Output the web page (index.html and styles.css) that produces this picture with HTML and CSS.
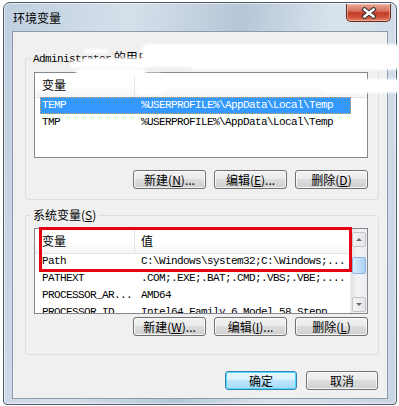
FILE: index.html
```html
<!DOCTYPE html>
<html lang="zh-CN">
<head>
    <meta charset="UTF-8">
    <title>环境变量</title>
    <link rel="stylesheet" href="styles.css">
</head>
<body>
    <div class="window">
        <div class="titlebar">
            <span class="title">环境变量</span>
            <div class="close-btn">
                <svg width="16" height="12" viewBox="0 0 16 12">
                    <path d="M3.5 2.5 L12.5 9.5 M12.5 2.5 L3.5 9.5" stroke="#3b3434" stroke-width="4.6" stroke-linecap="square" fill="none"/>
                    <path d="M3.5 2.5 L12.5 9.5 M12.5 2.5 L3.5 9.5" stroke="#ffffff" stroke-width="2.4" stroke-linecap="square" fill="none"/>
                </svg>
            </div>
        </div>

        <div class="client">
            <fieldset class="group group-user">
                <legend><span class="mono">Administrator</span> 的用户变量(<u>U</u>)</legend>
                <div class="list">
                    <div class="list-main">
                        <div class="list-head"><span class="col1">变量</span><span class="col2">值</span></div>
                        <div class="row selected"><span class="col1 mono">TEMP</span><span class="col2 mono">%USERPROFILE%\AppData\Local\Temp</span></div>
                        <div class="row"><span class="col1 mono">TMP</span><span class="col2 mono">%USERPROFILE%\AppData\Local\Temp</span></div>
                    </div>
                </div>
                <div class="buttons">
                    <button class="btn">新建(<u>N</u>)...</button>
                    <button class="btn">编辑(<u>E</u>)...</button>
                    <button class="btn">删除(<u>D</u>)</button>
                </div>
            </fieldset>

            <fieldset class="group group-system">
                <legend>系统变量(<u>S</u>)</legend>
                <div class="list">
                    <div class="list-main">
                        <div class="list-head"><span class="col1">变量</span><span class="col2">值</span></div>
                        <div class="row"><span class="col1 mono">Path</span><span class="col2 mono">C:\Windows\system32;C:\Windows;...</span></div>
                        <div class="row"><span class="col1 mono">PATHEXT</span><span class="col2 mono">.COM;.EXE;.BAT;.CMD;.VBS;.VBE;....</span></div>
                        <div class="row"><span class="col1 mono">PROCESSOR_AR...</span><span class="col2 mono">AMD64</span></div>
                        <div class="row"><span class="col1 mono">PROCESSOR_ID</span><span class="col2 mono">Intel64 Family 6 Model 58 Stepp</span></div>
                    </div>
                    <div class="scrollbar">
                        <div class="sb-btn"><span class="arrow up"></span></div>
                        <div class="sb-thumb"></div>
                        <div class="sb-btn sb-down"><span class="arrow down"></span></div>
                    </div>
                </div>
                <div class="buttons">
                    <button class="btn">新建(<u>W</u>)...</button>
                    <button class="btn">编辑(<u>I</u>)...</button>
                    <button class="btn">删除(<u>L</u>)</button>
                </div>
            </fieldset>

            <div class="dialog-buttons">
                <button class="btn btn-default">确定</button>
                <button class="btn">取消</button>
            </div>
        </div>

        <!-- redaction smudges over the user name -->
        <div class="smudge s1"></div>
        <div class="smudge s2"></div>
        <div class="smudge s3"></div>
        <div class="smudge s4"></div>
        <div class="smudge s5"></div>
        <div class="smudge s6"></div>
        <div class="smudge s7"></div>
        <div class="smudge s8"></div>

        <!-- red annotation box round the Path row -->
        <div class="mark-box"></div>
    </div>
</body>
</html>
```

FILE: styles.css
```css
body {
    margin: 0;
    background: #ffffff;
    font-family: "Noto Sans CJK SC", "Liberation Sans", sans-serif;
    font-size: 12px;
    color: #000;
    overflow: hidden;
}

.window {
    position: relative;
    box-sizing: border-box;
    width: 394px;
    height: 403px;
    margin: 2px 0 0 3px;
    padding: 0 8px 5px 8px;
    border: 1px solid #4d5b69;
    border-radius: 7px 7px 4px 4px;
    background: linear-gradient(100deg, #bfcfdf 0%, #d6e0eb 28%, #b6c6d7 52%, #d9e3ed 72%, #c8d5e3 100%);
    box-shadow: inset 0 0 0 1px rgba(255, 255, 255, 0.55);
}

.titlebar {
    display: flex;
    justify-content: space-between;
    align-items: flex-start;
    height: 28px;
}

.title {
    padding: 8px 0 0 1px;
    line-height: 14px;
    color: #000;
}

.close-btn {
    display: flex;
    align-items: center;
    justify-content: center;
    box-sizing: border-box;
    width: 45px;
    height: 18px;
    margin: 1px -3px 0 0;
    border: 1px solid #6a2a22;
    border-top: none;
    border-radius: 0 0 5px 5px;
    background: linear-gradient(#e7a795 0%, #d77562 40%, #c33c28 52%, #d0563c 80%, #e28a6c 100%);
    box-shadow: inset 0 0 0 1px rgba(255, 210, 200, 0.5);
}

.client {
    box-sizing: border-box;
    height: 368px;
    border: 1px solid #8c9aab;
    background: #f0f0f0;
    overflow: hidden;
}

.mono {
    font-family: "Liberation Mono", "Noto Sans CJK SC", monospace;
    font-size: 11px;
    letter-spacing: -0.6px;
}

/* group boxes */
.group {
    min-width: 0;
    margin: 0 8px 0 12px;
    padding: 6px 10px 10px 8px;
    border: 1px solid #d5dfe5;
    border-radius: 3px;
}

.group-user {
    margin-top: 18px;
}

.group-system {
    margin-top: 8px;
    padding-bottom: 18px;
}

.group legend {
    margin-left: -3px;
    padding: 0 2px;
    line-height: 14px;
}

/* list views */
.list {
    display: flex;
    box-sizing: border-box;
    height: 86px;
    border: 1px solid #828790;
    background: #fff;
    overflow: hidden;
}

.list-main {
    flex: 1;
    min-width: 0;
    overflow: hidden;
}

.list-head {
    display: flex;
    height: 24px;
    border-bottom: 1px solid #e5e5e5;
    background: linear-gradient(#ffffff 0%, #ffffff 55%, #f3f4f6 100%);
    line-height: 23px;
}

.list-head .col1 {
    box-sizing: border-box;
    width: 100px;
    padding-left: 7px;
    border-right: 1px solid #e3e5e9;
}

.list-head .col2 {
    padding-left: 6px;
}

.row {
    display: flex;
    width: 311px;
    height: 17px;
    margin-left: 5px;
    line-height: 17px;
    white-space: nowrap;
}

.list-head + .row {
    margin-top: -1px;
}

.row .col1 {
    box-sizing: border-box;
    width: 95px;
    padding-left: 2px;
    overflow: hidden;
}

.row .col2 {
    padding-left: 6px;
}

.row.selected {
    background: #3399ff;
    color: #fff;
    outline: 1px dotted #e8a35e;
    outline-offset: -1px;
}

/* scrollbar of the system list */
.scrollbar {
    display: flex;
    flex-direction: column;
    box-sizing: border-box;
    width: 17px;
    padding: 3px 1px 1px 1px;
    background: linear-gradient(to right, #e3e3e6, #f2f2f4 40%, #eeeef0);
    border-left: 1px solid #ececec;
}

.sb-btn {
    display: flex;
    align-items: center;
    justify-content: center;
    box-sizing: border-box;
    height: 15px;
    border: 1px solid #c2c3c9;
    border-radius: 2px;
    background: linear-gradient(to right, #f4f4f4, #e6e6e6);
}

.sb-down {
    margin-top: auto;
}

.arrow {
    width: 0;
    height: 0;
    border-left: 3px solid transparent;
    border-right: 3px solid transparent;
}

.arrow.up {
    border-bottom: 3px solid #6b6b6b;
}

.arrow.down {
    border-top: 3px solid #6b6b6b;
}

.sb-thumb {
    box-sizing: border-box;
    height: 17px;
    margin-top: 10px;
    border: 1px solid #8db2e3;
    border-radius: 2px;
    background: linear-gradient(to right, #dbeefc, #bfe0f8 50%, #a9d3f3);
}

/* buttons */
.buttons {
    display: flex;
    justify-content: flex-end;
    gap: 8px;
    margin-top: 12px;
}

.group-system .buttons {
    margin-top: 3px;
}

.btn {
    box-sizing: border-box;
    width: 73px;
    height: 19px;
    padding: 0;
    border: 1px solid #707070;
    border-radius: 3px;
    background: linear-gradient(#f2f2f2 0%, #ebebeb 45%, #dddddd 50%, #cfcfcf 100%);
    box-shadow: inset 0 0 0 1px rgba(255, 255, 255, 0.75);
    font-family: "Noto Sans CJK SC", "Liberation Sans", sans-serif;
    font-size: 12px;
    line-height: 16px;
    color: #000;
}

.dialog-buttons {
    display: flex;
    justify-content: flex-end;
    gap: 9px;
    margin: 16px 9px 0 0;
}

.dialog-buttons .btn {
    width: 72px;
}

.btn-default {
    border-color: #3c7fb1;
    background: linear-gradient(#eaf6fd 0%, #d9f0fc 45%, #bee6fd 50%, #a7d9f5 100%);
    box-shadow: inset 0 0 0 1px #48dbfb;
}

/* overlays */
.smudge {
    position: absolute;
    background: #ffffff;
    border-radius: 6px;
    filter: blur(1.2px);
}

.s1 { left: 138px; top: 41px; width: 258px; height: 23px; }
.s2 { left: 66px; top: 58px; width: 80px; height: 7px; }
.s3 { left: 186px; top: 54px; width: 210px; height: 13px; }
.s4 { left: 318px; top: 76px; width: 80px; height: 14px; }
.s5 { left: 72px; top: 66px; width: 70px; height: 7px; }
.s6 { left: 132px; top: 70px; width: 28px; height: 22px; }
.s7 { left: 80px; top: 46px; width: 24px; height: 4px; border-radius: 2px; }
.s8 { left: 78px; top: 55px; width: 66px; height: 5px; border-radius: 2px; }

.mark-box {
    position: absolute;
    left: 35px;
    top: 224px;
    box-sizing: border-box;
    width: 313px;
    height: 45px;
    border: 3px solid #e60012;
}
```
